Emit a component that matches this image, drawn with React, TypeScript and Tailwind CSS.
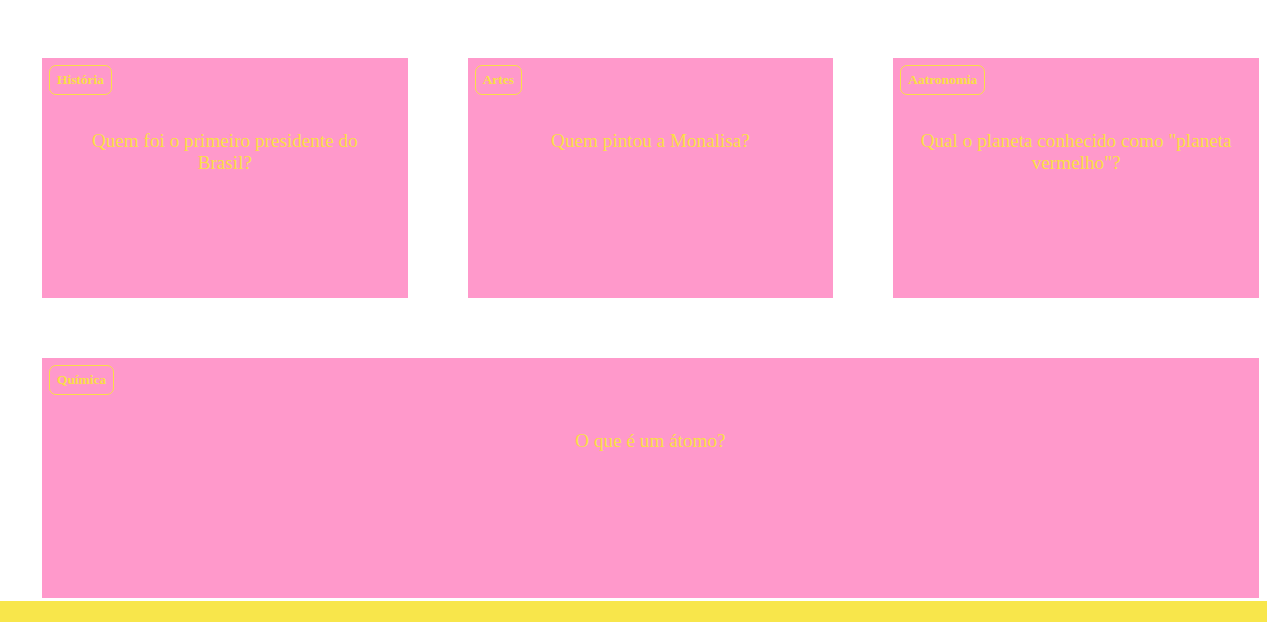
const cards = [
  { category: "História", question: "Quem foi o primeiro presidente do Brasil?" },
  { category: "Artes", question: "Quem pintou a Monalisa?" },
  { category: "Aatronomia", question: 'Qual o planeta conhecido como "planeta vermelho"?' },
];

function QuizCard({ category, question, wide }: { category: string; question: string; wide?: boolean }) {
  return (
    <div className={`bg-[#ff99cb] h-[240px] p-[7px] flex flex-col ${wide ? "col-span-3" : ""}`}>
      <div className="self-start border border-[#f9df45] rounded-[7px] h-[30px] px-[7px] flex items-center text-[13.4px] font-bold text-[#f9df45]">
        {category}
      </div>
      <p className="mt-[35px] px-5 text-center text-[19.2px] leading-[22px] text-[#f9df45]">{question}</p>
    </div>
  );
}

export default function App() {
  return (
    <div className="min-h-[622px] bg-white flex flex-col" style={{ fontFamily: '"Liberation Serif", "Times New Roman", serif' }}>
      <div className="pt-[58px] pl-[42px] pr-[8px] pb-[3px] grid grid-cols-3 gap-x-[60px] gap-y-[60px]">
        {cards.map((c) => (
          <QuizCard key={c.category} category={c.category} question={c.question} />
        ))}
        <QuizCard category="Química" question="O que é um átomo?" wide />
      </div>
      <footer className="bg-[#f8e64b] h-[21px]" />
    </div>
  );
}
